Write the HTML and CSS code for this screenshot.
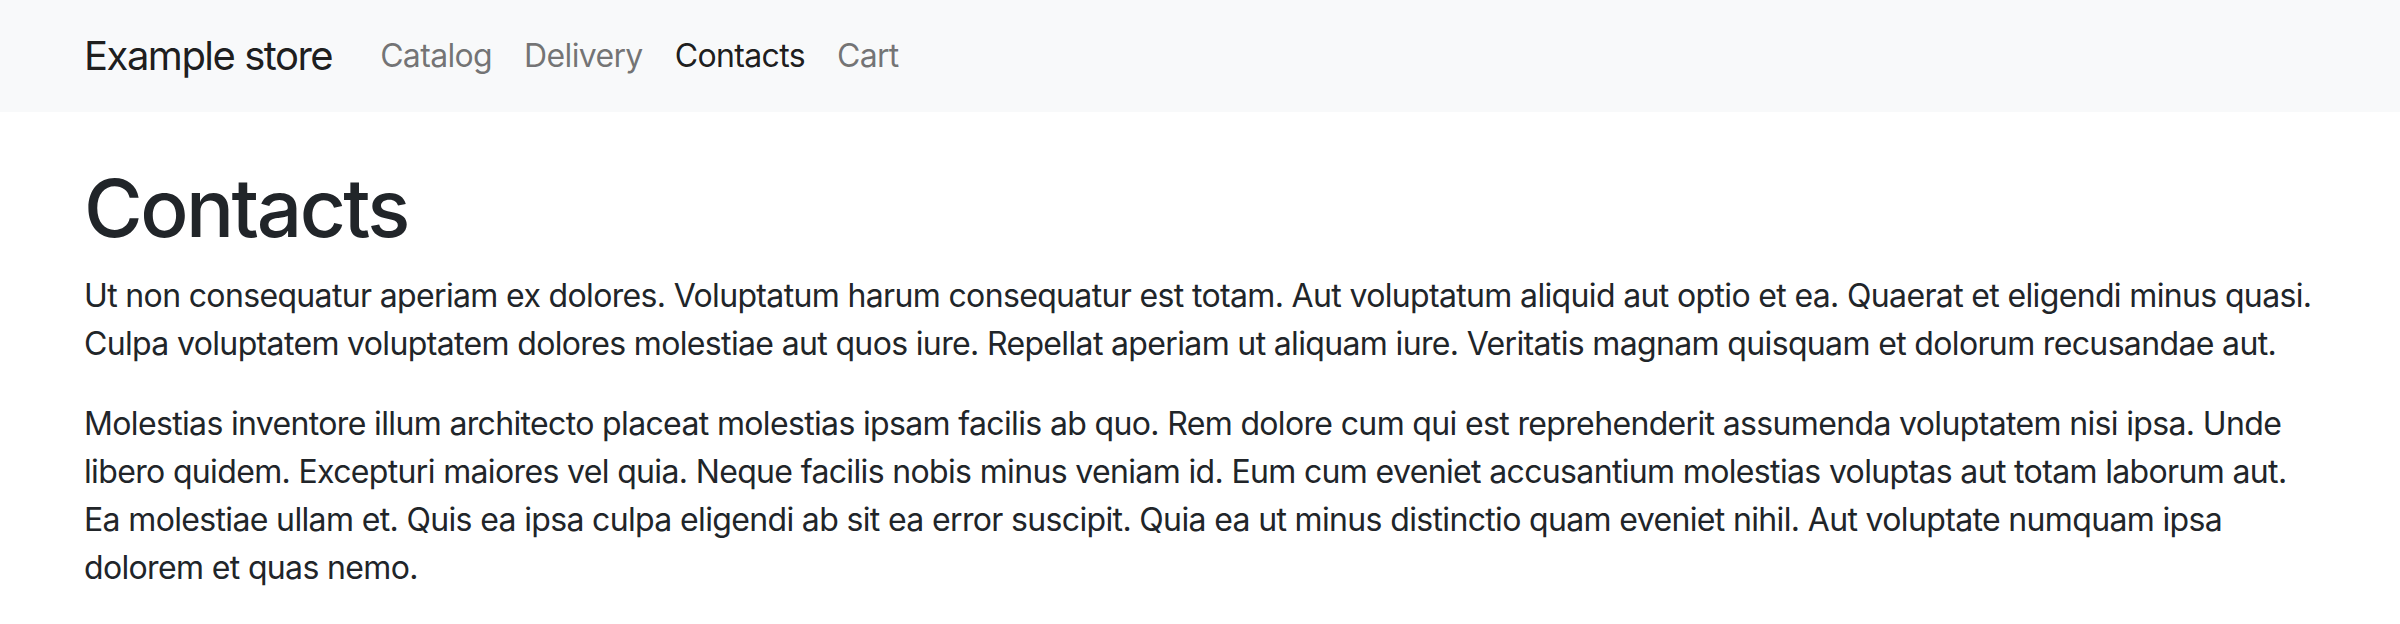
FILE: index.html
```html
<!DOCTYPE html>
<html lang="en">
<head>
<meta charset="utf-8">
<title>Contacts</title>
<link rel="stylesheet" href="styles.css">
</head>
<body>
<nav class="navbar">
  <div class="container nav-inner">
    <a class="brand" href="#">Example store</a>
    <ul class="nav">
      <li><a class="nav-link" href="#">Catalog</a></li>
      <li><a class="nav-link" href="#">Delivery</a></li>
      <li><a class="nav-link active" href="#">Contacts</a></li>
      <li><a class="nav-link" href="#">Cart</a></li>
    </ul>
  </div>
</nav>
<main class="container main">
  <h1 class="title">Contacts</h1>
  <p>Ut non consequatur aperiam ex dolores. Voluptatum harum consequatur est totam. Aut voluptatum aliquid aut optio et ea. Quaerat et eligendi minus quasi. Culpa voluptatem voluptatem dolores molestiae aut quos iure. Repellat aperiam ut aliquam iure. Veritatis magnam quisquam et dolorum recusandae aut.</p>
  <p>Molestias inventore illum architecto placeat molestias ipsam facilis ab quo. Rem dolore cum qui est reprehenderit assumenda voluptatem nisi ipsa. Unde libero quidem. Excepturi maiores vel quia. Neque facilis nobis minus veniam id. Eum cum eveniet accusantium molestias voluptas aut totam laborum aut. Ea molestiae ullam et. Quis ea ipsa culpa eligendi ab sit ea error suscipit. Quia ea ut minus distinctio quam eveniet nihil. Aut voluptate numquam ipsa dolorem et quas nemo.</p>
</main>
</body>
</html>
```
FILE: styles.css
```css
* { box-sizing: border-box; }
html, body { margin: 0; padding: 0; }
body {
  font-family: Inter, "Noto Sans", "Liberation Sans", sans-serif;
  font-size: 32px;
  line-height: 1.5;
  letter-spacing: -0.65px;
  color: #212529;
  background: #fff;
}
.container {
  max-width: 2280px;
  margin: 0 auto;
  padding: 0 24px;
}
.navbar {
  background: #f8f9fa;
  padding: 16px 0;
}
.nav-inner {
  display: flex;
  align-items: center;
}
.brand {
  font-size: 40px;
  line-height: 60px;
  letter-spacing: -1.5px;
  padding: 10px 0;
  margin-right: 32px;
  color: rgba(0,0,0,.9);
  text-decoration: none;
}
.nav {
  display: flex;
  list-style: none;
  margin: 0;
  padding: 0;
}
.nav-link {
  display: block;
  padding: 16px;
  color: rgba(0,0,0,.55);
  text-decoration: none;
}
.nav-link.active { color: rgba(0,0,0,.9); }
.main { padding-top: 48px; }
.title {
  font-size: 80px;
  font-weight: 500;
  line-height: 1.2;
  letter-spacing: -2.5px;
  margin: 0 0 16px;
}
p { margin: 0 0 32px; }
```
